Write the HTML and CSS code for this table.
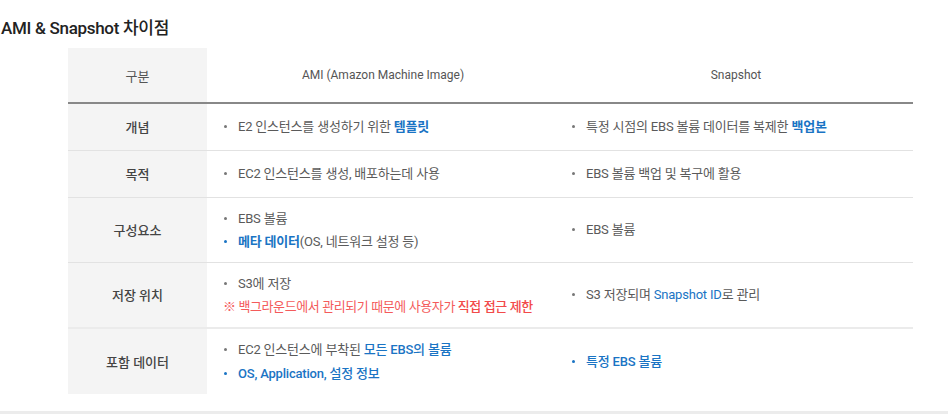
FILE: index.html
```html
<!DOCTYPE html>
<html lang="ko">
<head>
<meta charset="utf-8">
<link rel="stylesheet" href="styles.css">
</head>
<body>
<h2 class="title">AMI &amp; Snapshot 차이점</h2>
<div class="wrap">
<table class="cmp">
  <colgroup><col class="c1"><col class="c2"><col class="c3"></colgroup>
  <thead>
    <tr><th class="lab">구분</th><th>AMI (Amazon Machine Image)</th><th>Snapshot</th></tr>
  </thead>
  <tbody>
    <tr>
      <th class="lab">개념</th>
      <td><ul><li>E2 인스턴스를 생성하기 위한 <b class="blue">템플릿</b></li></ul></td>
      <td><ul><li>특정 시점의 EBS 볼륨 데이터를 복제한 <b class="blue">백업본</b></li></ul></td>
    </tr>
    <tr>
      <th class="lab">목적</th>
      <td><ul><li>EC2 인스턴스를 생성, 배포하는데 사용</li></ul></td>
      <td><ul><li>EBS 볼륨 백업 및 복구에 활용</li></ul></td>
    </tr>
    <tr>
      <th class="lab">구성요소</th>
      <td><ul><li>EBS 볼륨</li><li class="bl"><b class="blue">메타 데이터</b>(OS, 네트워크 설정 등)</li></ul></td>
      <td><ul><li>EBS 볼륨</li></ul></td>
    </tr>
    <tr class="thick">
      <th class="lab">저장 위치</th>
      <td><ul><li>S3에 저장</li></ul><p class="note">※ 백그라운드에서 관리되기 때문에 사용자가 <b>직접 접근 제한</b></p></td>
      <td><ul><li>S3 저장되며 <span class="blue">Snapshot ID</span>로 관리</li></ul></td>
    </tr>
    <tr class="last">
      <th class="lab">포함 데이터</th>
      <td><ul><li>EC2 인스턴스에 부착된 <span class="blue m">모든 EBS의 볼륨</span></li><li class="bl"><span class="blue m">OS, Application, 설정 정보</span></li></ul></td>
      <td><ul><li class="bl"><span class="blue m">특정 EBS 볼륨</span></li></ul></td>
    </tr>
  </tbody>
</table>
</div>
<div class="bottom"></div>
</body>
</html>
```
FILE: styles.css
```css
* { box-sizing: border-box; }
html, body { margin: 0; padding: 0; background: #fff; }
body {
  font-family: Roboto, "Noto Sans CJK KR", sans-serif;
  color: #5a5a5a;
  font-size: 13px;
}
.title {
  margin: 0;
  padding: 14px 0 0 1px;
  height: 48px;
  font-size: 17px;
  font-weight: 500;
  color: #222;
  letter-spacing: -0.3px;
}
.wrap { padding: 0 35px 0 68px; }
.cmp {
  width: 845px;
  border-collapse: collapse;
  table-layout: fixed;
}
.c1 { width: 139px; }
.c2 { width: 352px; }
.c3 { width: 354px; }
thead th {
  height: 55px;
  font-size: 12px;
  font-weight: 400;
  color: #555;
  text-align: center;
  border-bottom: 2px solid #888;
  padding: 0;
}
th.lab {
  background: #f4f4f4;
  font-weight: 500;
  color: #444;
  text-align: center;
}
thead th.lab { font-weight: 400; color: #555; font-size: 13px; }
tbody th, tbody td {
  border-bottom: 1px solid #e2e2e2;
  height: 47px;
  padding: 9px 0;
  vertical-align: middle;
}
tbody td { letter-spacing: -0.2px; }
tbody tr.thick th, tbody tr.thick td { border-bottom: 2px solid #ebebeb; }
tbody tr.last th, tbody tr.last td { border-bottom: 0; height: 64px; padding: 9px 0; }
td ul { list-style: none; margin: 0; padding: 0 0 0 31px; }
tbody td:nth-child(3) ul { padding-left: 27px; }
td li { position: relative; line-height: 23px; }
tr.last td li + li { margin-top: 1px; }
td li::before {
  content: "";
  position: absolute;
  left: -14px;
  top: 10px;
  width: 3px;
  height: 3px;
  border-radius: 50%;
  background: #777;
}
td li.bl::before { background: #1a74c4; }
.blue { color: #1a74c4; }
b.blue { font-weight: 700; }
.m { font-weight: 500; }
.note {
  margin: 0;
  padding-left: 16px;
  line-height: 23px;
  color: #f45b5b;
  letter-spacing: -0.4px;
}
.note b { font-weight: 500; color: #f24a4a; }
.bottom {
  margin-top: 17px;
  height: 3px;
  background: #ececec;
}
```
